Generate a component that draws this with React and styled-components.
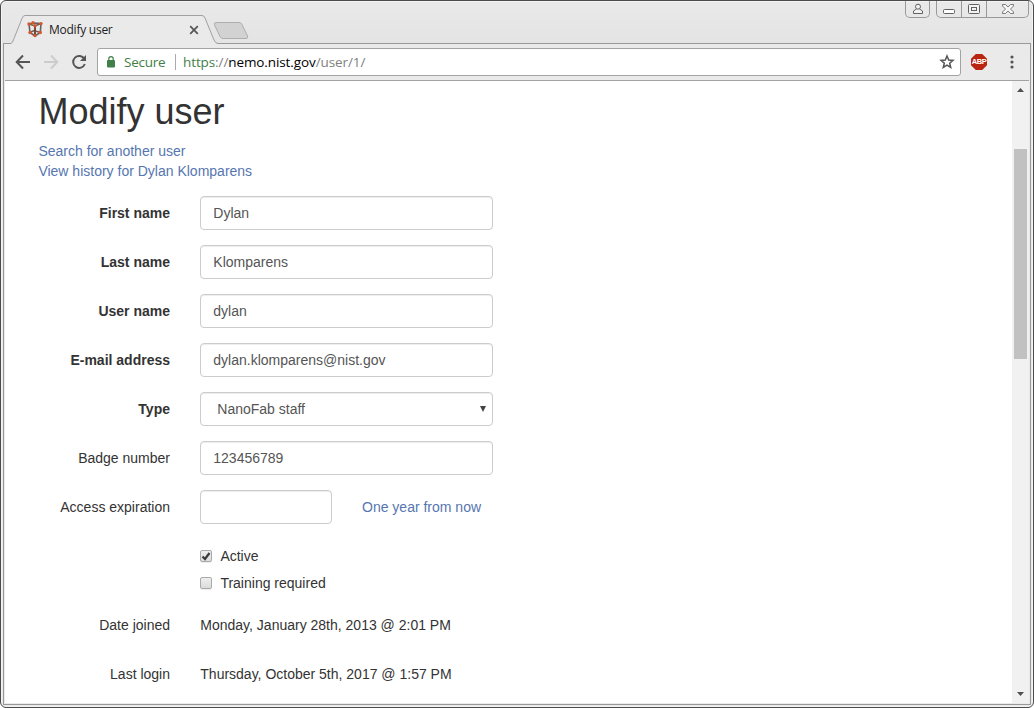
import React from "react";
import styled, { createGlobalStyle } from "styled-components";

const GlobalStyle = createGlobalStyle`
  *, *::before, *::after { box-sizing: border-box; }
  html, body { margin: 0; background: #fff; overflow: hidden; }
  body { font-family: "Liberation Sans", Arial, sans-serif; font-size: 14px; line-height: 20px; color: #333; }
  svg { display: block; flex: none; }
`;

const Window = styled.div`
  display: flex;
  flex-direction: column;
  width: 1034px;
  height: 708px;
  padding: 0 2px 2px;
  border: 1px solid #4d4a4c;
  border-radius: 6px;
  background: linear-gradient(#e9e9e9 0, #e4e4e4 43px, #e9e9e9 90px);
  box-shadow: inset 0 0 0 1px #f4f4f4;
`;

const TitleBar = styled.div`
  display: flex;
  align-items: flex-start;
  height: 42px;
`;

const Tab = styled.div`
  position: relative;
  z-index: 1;
  display: flex;
  align-items: center;
  width: 207px;
  height: 29px;
  margin: 14px 0 0 8px;
  padding: 0 19px 0 16px;
  color: #222;
  font: 12px/16px "Open Sans", sans-serif;
`;

const TabShape = styled.svg`
  position: absolute;
  left: 0;
  top: 0;
  z-index: -1;
`;

const TabTitle = styled.span`
  flex: 1;
  margin-left: 6px;
  letter-spacing: -0.25px;
  white-space: nowrap;
`;

const NewTab = styled.svg`
  margin: 20px 0 0 -6px;
`;

const Caption = styled.div`
  display: flex;
  margin-left: auto;
  padding-right: 2px;
`;

const CaptionGroup = styled.div`
  display: flex;
  height: 17px;
  margin-left: 6px;
  border: 1px solid #999;
  border-top: 0;
  border-radius: 0 0 5px 5px;
  overflow: hidden;
`;

const CaptionButton = styled.div`
  display: flex;
  align-items: center;
  justify-content: center;
  width: ${(p) => p.$w}px;
  & + & { border-left: 1px solid #999; }
`;

const Panel = styled.div`
  display: flex;
  flex-direction: column;
  flex: 1;
  min-height: 0;
  padding: 0 1px 1px;
  border: 1px solid #999;
  background: #eaeaea;
`;

const Toolbar = styled.div`
  display: flex;
  align-items: center;
  height: 37px;
  padding: 0 9px 0 10px;
  border-bottom: 1px solid #a2a2a2;
`;

const NavIcons = styled.div`
  display: flex;
  gap: 12px;
  width: 82px;
`;

const AddressBar = styled.div`
  display: flex;
  align-items: center;
  width: 864px;
  height: 28px;
  padding: 0 5px 0 8px;
  border: 1px solid #a3a3a3;
  border-radius: 3px;
  background: #fff;
  color: #808080;
  font: 13.5px/20px "Open Sans", sans-serif;
`;

const Secure = styled.span`
  box-sizing: content-box;
  width: 43px;
  height: 16px;
  margin-left: 8px;
  padding-right: 8px;
  border-right: 1px solid #aaa;
  line-height: 16px;
  letter-spacing: -0.25px;
  color: #418048;
`;

const Url = styled.span`
  flex: 1;
  margin-left: 7px;
  letter-spacing: -0.1px;
`;

const Scheme = styled.span`color: #418048;`;
const Host = styled.span`color: #000;`;

const AdBlock = styled.div`
  display: flex;
  align-items: center;
  justify-content: center;
  width: 16px;
  height: 16px;
  margin-left: 10px;
  background: #b92510;
  clip-path: polygon(30% 0, 70% 0, 100% 30%, 100% 70%, 70% 100%, 30% 100%, 0 70%, 0 30%);
  color: #fff;
  font: bold 7.5px/16px "Liberation Sans", sans-serif;
  letter-spacing: -0.5px;
`;

const MenuIcon = styled.svg`
  margin-left: auto;
  margin-right: 6px;
`;

const Viewport = styled.div`
  display: flex;
  flex: 1;
  min-height: 0;
  background: #fff;
`;

const Page = styled.main`
  flex: 1;
  padding: 11px 0 0 33.4px;
`;

const Heading = styled.h1`
  margin: 0 0 9px;
  font-size: 36px;
  font-weight: 400;
  line-height: 40px;
`;

const Link = styled.a`
  display: ${(p) => (p.$block ? "block" : "inline")};
  color: #5676b0;
`;

const Form = styled.div`
  margin: 15px 0 0 -0.4px;
`;

const Row = styled.div`
  display: flex;
  align-items: center;
  height: 34px;
  margin-bottom: 15px;
`;

const Label = styled.label`
  width: 132px;
  margin-right: 30px;
  font-weight: ${(p) => (p.$bold ? 700 : 400)};
  text-align: right;
`;

const Value = styled.span`
  padding-left: 0.3px;
`;

const Field = styled.div`
  display: flex;
  align-items: center;
  justify-content: space-between;
  width: ${(p) => p.$w || 293}px;
  height: 34px;
  padding: ${(p) => (p.$select ? "0 6px 0 16.3px" : "0 12.3px")};
  margin-right: 30px;
  border: 1px solid #ccc;
  border-radius: 4px;
  box-shadow: inset 0 1px 1px rgba(0, 0, 0, 0.075);
  color: #555;
`;

const Checks = styled.div`
  display: flex;
  flex-direction: column;
  gap: 7px;
  margin: 0 0 15px 162px;
  padding-top: 7px;
`;

const Check = styled.div`
  display: flex;
  align-items: center;
  height: 20px;
`;

const Box = styled.span`
  display: flex;
  align-items: center;
  justify-content: center;
  width: 12px;
  height: 12px;
  margin-right: 8.4px;
  border: 1px solid #aaa;
  border-radius: 2px;
  background: linear-gradient(#eee, #dcdcdc);
  box-shadow: 0 1px 0 #eee;
`;

const ScrollBar = styled.div`
  display: flex;
  flex-direction: column;
  align-items: center;
  width: 17px;
  padding: 7px 0;
  background: #f1f1f1;
`;

const Thumb = styled.div`
  width: 13px;
  height: 210px;
  margin: 57px 0 auto;
  background: #c1c1c1;
`;

const atoms = [[2, 3], [6, 1.8], [14, 2.6], [8, 4.8], [3, 11.5], [13.3, 11.5], [8, 14.6]];

const Favicon = () => (
  <svg width="16" height="17" viewBox="0 0 16 17">
    <path d="M2 3L6 2L14 2.600L13.300 11.500L8 15L3 11.500ZM2 3L8 5L14 2.600M3 11.500L7 9.500L13.300 11.500" fill="none" stroke="#66605e" strokeWidth="1.600" />
    <path d="M8 5V14" stroke="#7d4636" strokeWidth="2" />
    {atoms.map(([x, y]) => <circle key={`${x}-${y}`} cx={x} cy={y} r="1.7" fill="#d9572c" />)}
  </svg>
);

const fields = [
  ["First name", "Dylan"],
  ["Last name", "Klomparens"],
  ["User name", "dylan"],
  ["E-mail address", "dylan.klomparens@nist.gov"],
];

export default function App() {
  return (
    <>
      <GlobalStyle />
      <Window>
        <TitleBar>
          <Tab>
            <TabShape width="207" height="29" viewBox="0 0 207 29">
              <path d="M0 28.5C2 28 1.8 26.5 3 23.5L11 3.5Q12 .5 14 .5H191Q193 .5 194 3L203 25Q204.500 28.500 207 28.500V29H0Z" fill="#eaeaea" />
              <path d="M0 28.500Q1.500 28 3 23.500L11 3.500Q12 .5 14 .5H191Q193 .5 194 3L203 25Q204.500 28.500 207 28.500" fill="none" stroke="#a0a0a0" />
            </TabShape>
            <Favicon />
            <TabTitle>Modify user</TabTitle>
            <svg width="10" height="10" viewBox="0 0 10 10"><path d="M1.200 1.200L8.800 8.800M8.800 1.200L1.200 8.800" stroke="#555" strokeWidth="1.7" /></svg>
          </Tab>
          <NewTab width="38" height="20" viewBox="0 0 38 20">
            <path d="M4 1.500H27Q29 1.500 30 3.500L35.500 15Q36.500 17.500 34 17.500H11Q9 17.500 8 15.500L2.500 4Q1.500 1.500 4 1.500Z" fill="#d2d2d2" stroke="#aeaeae" />
          </NewTab>
          <Caption>
            <CaptionGroup>
              <CaptionButton $w={23}>
                <svg width="12" height="12" viewBox="0 0 12 12" fill="#f2f2f2" stroke="#606060"><path d="M4.500 6L1.500 8V10.500H10.500V8L7.500 6" /><circle cx="6" cy="3.700" r="2.500" /></svg>
              </CaptionButton>
            </CaptionGroup>
            <CaptionGroup>
              <CaptionButton $w={24}>
                <svg width="12" height="14" viewBox="0 0 12 14"><rect x=".5" y="7.500" width="11" height="4" rx="1" fill="#fff" stroke="#606060" /></svg>
              </CaptionButton>
              <CaptionButton $w={25}>
                <svg width="12" height="12" viewBox="0 0 12 12" fill="#f2f2f2" stroke="#606060"><rect x=".5" y="1.500" width="11" height="9" rx="1" /><rect x="3.500" y="4.500" width="5" height="3" /></svg>
              </CaptionButton>
              <CaptionButton $w={42}>
                <svg width="12" height="12" viewBox="0 0 12 12"><path d="M.5 1.500H3.500L6 4L8.500 1.500H11.500V3L8.500 6L11.500 9V10.500H8.500L6 8L3.500 10.500H.5V9L3.500 6L.5 3Z" fill="#f5f5f5" stroke="#606060" strokeWidth=".8" /></svg>
              </CaptionButton>
            </CaptionGroup>
          </Caption>
        </TitleBar>
        <Panel>
          <Toolbar>
            <NavIcons>
              <svg width="16" height="16" viewBox="0 0 16 16" fill="none" stroke="#555" strokeWidth="2"><path d="M15 8H2M8 1.500L1.700 8L8 14.500" /></svg>
              <svg width="16" height="16" viewBox="0 0 16 16" fill="none" stroke="#ccc" strokeWidth="2"><path d="M1 8H14M8 1.500L14.300 8L8 14.500" /></svg>
              <svg width="16" height="16" viewBox="0 0 16 16"><path d="M13.300 4.800A6 6 0 1 0 13.800 10" fill="none" stroke="#555" strokeWidth="2" /><path d="M15 1V7H9Z" fill="#555" /></svg>
            </NavIcons>
            <AddressBar>
              <svg width="10" height="12" viewBox="0 0 10 12"><rect x="1" y="4" width="8" height="7.500" rx="1" fill="#418048" /><path d="M2.800 5V2.800A2.200 2.200 0 0 1 7.200 2.800V5" fill="none" stroke="#418048" strokeWidth="1.200" /></svg>
              <Secure>Secure</Secure>
              <Url><Scheme>https</Scheme>://<Host>nemo.nist.gov</Host>/user/1/</Url>
              <svg width="16" height="16" viewBox="0 0 16 16"><path d="M8 2L9.700 6L14 6.400L10.700 9.200L11.700 13.500L8 11.200L4.300 13.500L5.300 9.200L2 6.400L6.300 6Z" fill="none" stroke="#555" strokeWidth="1.500" /></svg>
            </AddressBar>
            <AdBlock>ABP</AdBlock>
            <MenuIcon width="4" height="14" viewBox="0 0 4 14" fill="#555"><circle cx="2" cy="2" r="1.600" /><circle cx="2" cy="7" r="1.600" /><circle cx="2" cy="12" r="1.600" /></MenuIcon>
          </Toolbar>
          <Viewport>
            <Page>
              <Heading>Modify user</Heading>
              <Link $block>Search for another user</Link>
              <Link $block>View history for Dylan Klomparens</Link>
              <Form>
                {fields.map(([label, value]) => (
                  <Row key={label}><Label $bold>{label}</Label><Field>{value}</Field></Row>
                ))}
                <Row>
                  <Label $bold>Type</Label>
                  <Field $select>
                    NanoFab staff
                    <svg width="6" height="6" viewBox="0 0 6 6"><path d="M0 0H6L3 6Z" fill="#444" /></svg>
                  </Field>
                </Row>
                <Row><Label>Badge number</Label><Field>123456789</Field></Row>
                <Row><Label>Access expiration</Label><Field $w={132} /><Link>One year from now</Link></Row>
                <Checks>
                  <Check>
                    <Box><svg width="10" height="10" viewBox="0 0 10 10"><path d="M1.500 5.500L4 8L8.500 2" fill="none" stroke="#3c3c3c" strokeWidth="2.200" /></svg></Box>
                    Active
                  </Check>
                  <Check><Box />Training required</Check>
                </Checks>
                <Row><Label>Date joined</Label><Value>Monday, January 28th, 2013 @ 2:01 PM</Value></Row>
                <Row><Label>Last login</Label><Value>Thursday, October 5th, 2017 @ 1:57 PM</Value></Row>
              </Form>
            </Page>
            <ScrollBar>
              <svg width="7" height="4" viewBox="0 0 7 4"><path d="M3.500 0L7 4H0Z" fill="#505050" /></svg>
              <Thumb />
              <svg width="7" height="4" viewBox="0 0 7 4"><path d="M0 0H7L3.500 4Z" fill="#505050" /></svg>
            </ScrollBar>
          </Viewport>
        </Panel>
      </Window>
    </>
  );
}
